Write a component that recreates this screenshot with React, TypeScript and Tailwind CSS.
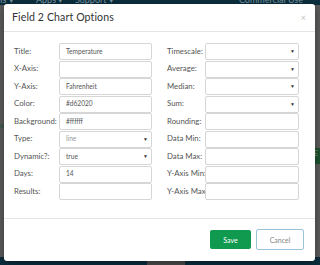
const font = { fontFamily: 'Lato, "Open Sans", sans-serif' }

const leftRows: { label: string; value?: string; select?: boolean; muted?: boolean }[] = [
  { label: 'Title:', value: 'Temperature' },
  { label: 'X-Axis:' },
  { label: 'Y-Axis:', value: 'Fahrenheit' },
  { label: 'Color:', value: '#d62020' },
  { label: 'Background:', value: '#ffffff' },
  { label: 'Type:', value: 'line', select: true, muted: true },
  { label: 'Dynamic?:', value: 'true', select: true },
  { label: 'Days:', value: '14' },
  { label: 'Results:' },
]

const rightRows: { label: string; value?: string; select?: boolean; muted?: boolean }[] = [
  { label: 'Timescale:', select: true },
  { label: 'Average:', select: true },
  { label: 'Median:', select: true },
  { label: 'Sum:', select: true },
  { label: 'Rounding:' },
  { label: 'Data Min:' },
  { label: 'Data Max:' },
  { label: 'Y-Axis Min:' },
  { label: 'Y-Axis Max:' },
]

function Field({ row, labelW, inputW }: { row: (typeof leftRows)[number]; labelW: string; inputW: string }) {
  return (
    <div className="flex h-[17px] items-center">
      <div className={`${labelW} shrink-0 whitespace-nowrap text-[7.8px] text-[#555]`}>{row.label}</div>
      <div
        className={`${inputW} relative z-10 flex h-[17px] shrink-0 items-center justify-between rounded-[2px] border border-[#d6d6d6] bg-white pl-[6px] pr-[3px] text-[6.6px] ${
          row.muted ? 'text-[#999]' : 'text-[#555]'
        }`}
      >
        <span>{row.value ?? ''}</span>
        {row.select && <span className="text-[5px] leading-none text-[#333]">▼</span>}
      </div>
    </div>
  )
}

export default function App() {
  return (
    <div className="relative h-[265px] w-[320px] overflow-hidden bg-[#5c5c5c]" style={font}>
      {/* page behind the backdrop */}
      <div className="flex h-full flex-col">
        <div className="h-[5px] overflow-hidden bg-[#0c2f3f]">
          <div className="-mt-[7px] flex whitespace-nowrap text-[9px] text-[#7f98a4]">
            <span className="-ml-[30px] w-[50px]">Channels ▾</span>
            <span className="ml-[16px] w-[23px]">Apps ▾</span>
            <span className="ml-[16px]">Support ▾</span>
            <span className="ml-auto mr-[17px]">Commercial Use</span>
          </div>
        </div>
        <div className="flex flex-1 flex-col">
          <div className="mt-[115px] flex h-[10px] items-center text-[8px] text-[#2b5a3a]">
            <span className="-ml-[3px]">as</span>
          </div>
          <div className="mt-[18px] flex h-[16px] justify-end">
            <div className="w-[6px] bg-[#1d5230] text-[7px] text-[#7fa08a]">E</div>
          </div>
        </div>
        <div className="flex h-[8px] bg-[#0b2d3d]">
          <div className="ml-[147px] mt-[4px] h-[4px] w-[38px] bg-[#4c4c4c]" />
        </div>
      </div>

      {/* modal */}
      <div className="absolute left-[4px] top-[4px] flex h-[257px] w-[311px] flex-col rounded-[3px] bg-white shadow-[0_2px_8px_rgba(0,0,0,0.4)]">
        <div className="flex h-[28px] shrink-0 items-center justify-between border-b border-[#e5e5e5] pl-[8px] pr-[9px]">
          <h4 className="text-[10.6px] tracking-[0.1px] text-[#333]">Field 2 Chart Options</h4>
          <span className="text-[9px] leading-none text-[#c4c4c4]">×</span>
        </div>

        <div className="flex gap-[15px] pl-[10px] pt-[11px]">
          <div className="flex flex-col gap-[0.55px]">
            {leftRows.map((r) => (
              <Field key={r.label} row={r} labelW="w-[45px]" inputW="w-[93px]" />
            ))}
          </div>
          <div className="flex flex-col gap-[0.55px]">
            {rightRows.map((r) => (
              <Field key={r.label} row={r} labelW="w-[38px]" inputW="w-[94px]" />
            ))}
          </div>
        </div>

        <div className="mt-[18px] flex justify-end gap-[5px] border-t border-[#e5e5e5] pr-[11px] pt-[10px]">
          <button className="mt-[1px] h-[19px] w-[41px] rounded-[2px] bg-[#0f9a4f] text-[7px] text-white" style={font}>
            Save
          </button>
          <button
            className="h-[21px] w-[48px] rounded-[2px] border border-[#9cc3de] bg-white text-[7px] text-[#888]"
            style={font}
          >
            Cancel
          </button>
        </div>
      </div>
    </div>
  )
}
